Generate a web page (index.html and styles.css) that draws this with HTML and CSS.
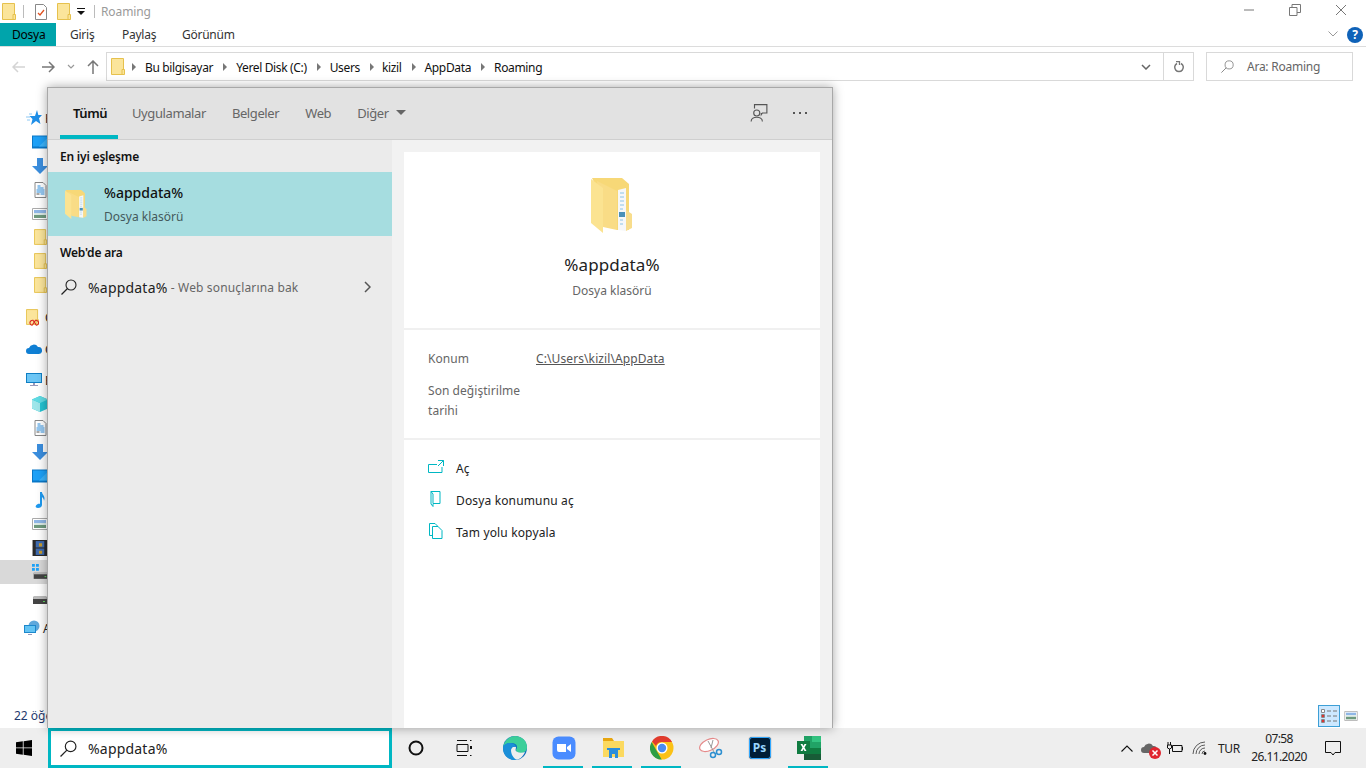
FILE: index.html
```html
<!DOCTYPE html>
<html lang="tr">
<head>
<meta charset="utf-8">
<title>Roaming</title>
<link rel="stylesheet" href="styles.css">
</head>
<body>
<svg class="defs" width="0" height="0">
  <defs>
    <symbol id="folder" viewBox="0 0 14 17">
      <path d="M.5.5h12v16H.5z" fill="#fbe59b" stroke="#e6c14d"/>
      <path d="M11 11.5h2.500v5H11z" fill="#fbe59b" stroke="#e6c14d"/>
    </symbol>
    <symbol id="desk" viewBox="0 0 16 13">
      <path d="M0 0h16v13H0z" fill="#0a78c8"/>
      <path d="M1 1h14v10H1z" fill="#1ea1f7"/>
      <path d="M7 11 15 3v8z" fill="#3db4fb"/>
    </symbol>
    <symbol id="down" viewBox="0 0 16 16">
      <path d="M5 0h6v8h5l-8 8-8-8h5z" fill="#3b8ede"/>
    </symbol>
    <symbol id="doc" viewBox="0 0 12 16">
      <path d="M.5.500h8l3 3v12H.5z" fill="#fff" stroke="#888"/>
      <path d="M3 4h3M3 6h6M2 8h8M2 10h8M6 12h4" stroke="#2b8fe0"/>
      <path d="M2 12h3" stroke="#555"/>
    </symbol>
    <symbol id="pic" viewBox="0 0 16 12">
      <path d="M.5.500h15v11H.5z" fill="#fff" stroke="#aaa"/>
      <path d="M2 2h12v3H2z" fill="#8fb6e6"/>
      <path d="M2 5h12v2H2z" fill="#dbeae6"/>
      <path d="M2 7h12v3H2z" fill="#6f9a7e"/>
    </symbol>
    <symbol id="drive" viewBox="0 0 14 8">
      <path d="M1 0h12l1 3v5H0V3z" fill="#444"/>
      <path d="M1 0h12l1 3H0z" fill="#bbb"/>
      <path d="M10 5h2v1h-2z" fill="#5fd35f"/>
    </symbol>
    <symbol id="glass" viewBox="0 0 16 16">
      <circle cx="10" cy="6" r="5" fill="none" stroke="currentColor" stroke-width="1.100"/>
      <path d="M6.500 9.500.500 15.500" stroke="currentColor" stroke-width="1.200"/>
    </symbol>
    <symbol id="foldopen" viewBox="0 0 42 55">
      <path d="M1 0h30l7 6v46H26z" fill="#f7d877"/>
      <path d="M27 12l8-2v43l-8-1z" fill="#f6f7f8"/>
      <path d="M29 15h4M29 19h4M29 23h4M29 27h4M29 31h3M29 42h3M29 46h3" stroke="#8cc4e6"/>
      <path d="M28 34h6v5h-6z" fill="#4a90b8"/>
      <path d="M35 32l6 4v14l-6 3z" fill="#f8dd8c"/>
      <path d="M6 3l20 10v39l-14-3z" fill="#f9dc86"/>
      <path d="M0 1l12 9v45L0 45z" fill="#fbe391"/>
    </symbol>
  </defs>
</svg>

<div class="screen">
  <div class="explorer">
    <div class="titlebar">
      <svg class="t-folder"><use href="#folder"/></svg>
      <span class="t-sep"></span>
      <svg class="t-check" viewBox="0 0 12 16"><path d="M.5.500h8l3 3v12H.5z" fill="#fff" stroke="#888"/><path d="M3 9l2 2 4-5" fill="none" stroke="#e0501f" stroke-width="1.300"/></svg>
      <svg class="t-folder t-folder2"><use href="#folder"/></svg>
      <svg class="t-drop" viewBox="0 0 8 8"><path d="M0 0h8v1H0zM0 3h8L4 7z" fill="#111"/></svg>
      <span class="t-sep t-sep2"></span>
      <span class="t-name">Roaming</span>
      <div class="win">
        <svg class="w-btn" viewBox="0 0 12 12"><path d="M1 6h10" stroke="#777"/></svg>
        <svg class="w-btn" viewBox="0 0 12 12"><path d="M.500 3.500h7.500v8H.500zM3 3.500V.500h8.500v8H8" fill="none" stroke="#777"/></svg>
        <svg class="w-btn" viewBox="0 0 12 12"><path d="M1 1l10 10M11 1 1 11" stroke="#777"/></svg>
      </div>
    </div>
    <div class="ribbon">
      <span class="tab tab-file">Dosya</span>
      <span class="tab tab-a">Giriş</span>
      <span class="tab tab-b">Paylaş</span>
      <span class="tab">Görünüm</span>
      <svg class="rib-chev" viewBox="0 0 10 6"><path d="M.500.500 5 5 9.500.500" fill="none" stroke="#999"/></svg>
      <span class="help">?</span>
    </div>
    <div class="addr">
      <div class="nav-btns">
        <svg class="nb" viewBox="0 0 14 12"><path d="M13 6H1M6 1 1 6l5 5" fill="none" stroke="#d4d4d4" stroke-width="1.500"/></svg>
        <svg class="nb" viewBox="0 0 14 12"><path d="M1 6h12M8 1l5 5-5 5" fill="none" stroke="#777" stroke-width="1.500"/></svg>
        <svg class="nb-s" viewBox="0 0 8 5"><path d="M1 1l3 3 3-3" fill="none" stroke="#999" stroke-width="1.200"/></svg>
        <svg class="nb nb-up" viewBox="0 0 12 14"><path d="M6 14V1M1 6l5-5 5 5" fill="none" stroke="#777" stroke-width="1.500"/></svg>
      </div>
      <div class="crumbs">
        <svg class="c-folder"><use href="#folder"/></svg>
        <span class="c-arrow first"></span><span class="crumb">Bu bilgisayar</span>
        <span class="c-arrow"></span><span class="crumb">Yerel Disk (C:)</span>
        <span class="c-arrow"></span><span class="crumb">Users</span>
        <span class="c-arrow c-arrow-n"></span><span class="crumb">kizil</span>
        <span class="c-arrow"></span><span class="crumb">AppData</span>
        <span class="c-arrow"></span><span class="crumb">Roaming</span>
        <svg class="c-drop" viewBox="0 0 10 6"><path d="M1 1l4 4 4-4" fill="none" stroke="#666" stroke-width="1.500"/></svg>
        <span class="c-refresh"><svg class="c-ref" viewBox="0 0 12 12"><path d="M4 2.500a4.300 4.300 0 1 0 4 0" fill="none" stroke="#777" stroke-width="1.500"/><path d="M3 .500h3.500v3.500" fill="none" stroke="#777" stroke-width="1.300"/></svg></span>
      </div>
      <div class="find">
        <svg class="find-i"><use href="#glass"/></svg>
        <span>Ara: Roaming</span>
      </div>
    </div>
    <div class="main">
      <div class="side">
        <div class="row r-star"><svg class="ic ic-star" viewBox="0 0 16 16"><path d="M11 0l1.300 5H16l-3 3.300L14.500 14 10 11l-5 4 1.500-6L3.500 6H9z" fill="#1f8fe8"/><path d="M0 7h4M1 10h3M3 4h3" stroke="#8cc8f4"/></svg><span class="lbl">Hızlı</span></div>
        <div class="row in"><svg class="ic"><use href="#desk"/></svg></div>
        <div class="row in"><svg class="ic"><use href="#down"/></svg></div>
        <div class="row in"><svg class="ic ic-n"><use href="#doc"/></svg></div>
        <div class="row in"><svg class="ic"><use href="#pic"/></svg></div>
        <div class="row in tight"><svg class="ic ic-n"><use href="#folder"/></svg></div>
        <div class="row in"><svg class="ic ic-n"><use href="#folder"/></svg></div>
        <div class="row in"><svg class="ic ic-n"><use href="#folder"/></svg></div>
        <div class="row gap8"><span class="cc"><svg class="ic ic-c"><use href="#folder"/></svg><svg class="cc-b" viewBox="0 0 10 8"><path d="M3 7.300a2.500 2.500 0 1 1 1-5L6.500 6a1.800 1.800 0 0 0 1 1.300 2.500 2.500 0 1 0-1-5L4 6a1.800 1.800 0 0 1-1 1.300z" fill="none" stroke="#d8231f" stroke-width="1.100"/></svg></span><span class="lbl">Creative Cloud</span></div>
        <div class="row gap8"><svg class="ic" viewBox="0 0 16 10"><path d="M3 10a3 3 0 0 1 0-6 5 5 0 0 1 9-1 3.500 3.500 0 0 1 1 7z" fill="#0f7fd4"/></svg><span class="lbl">OneDrive</span></div>
        <div class="row gap7"><svg class="ic" viewBox="0 0 16 14"><path d="M0 0h16v10H0z" fill="#0f7fc4"/><path d="M1 1h14v8H1z" fill="#6cc6f5"/><path d="M7 10h2v2h3v1H4v-1h3z" fill="#99b"/></svg><span class="lbl">Bu bilgisayar</span></div>
        <div class="row in"><svg class="ic" viewBox="0 0 16 16"><path d="M8 0l8 3.500v9L8 16 0 12.500v-9z" fill="#25c3d2"/><path d="M0 3.500 8 7v9l-8-3.500z" fill="#9ee6ea"/><path d="M8 7l8-3.500L8 0 0 3.500z" fill="#61dbe3"/></svg></div>
        <div class="row in"><svg class="ic ic-n"><use href="#doc"/></svg></div>
        <div class="row in"><svg class="ic"><use href="#down"/></svg></div>
        <div class="row in"><svg class="ic"><use href="#desk"/></svg></div>
        <div class="row in"><svg class="ic" viewBox="0 0 16 16"><path d="M8 0h2c0 3 4 4 2 9 0-2-1-3-2-4v8c0 2-2 3-4 3s-3-1-2-2.500c1-1.500 3-2 4-1.500z" fill="#1e9af0"/></svg></div>
        <div class="row in"><svg class="ic"><use href="#pic"/></svg></div>
        <div class="row in"><svg class="ic" viewBox="0 0 14 15"><path d="M0 0h14v15H0z" fill="#2a2a2a"/><path d="M3 1h8v6H3z" fill="#3e6bb0"/><path d="M3 8h8v6H3z" fill="#3e6bb0"/><path d="M6 3h3v3H6zM6 10h3v3H6z" fill="#c89a2b"/></svg></div>
        <div class="row in sel"><svg class="ic ic-drive" viewBox="0 0 14 14"><path d="M0 0h2.500v2.500H0zM3.500 0H6v2.500H3.500zM0 3.500h2.500V6H0zM3.500 3.500H6V6H3.500z" fill="#1ea1f7"/><path d="M1.500 8h12.500v5H1.500z" fill="#444"/><path d="M1.500 7h12.500v2H1.500z" fill="#bbb"/><path d="M11 10.500h1.500v1H11z" fill="#5fd35f"/></svg></div>
        <div class="row in gap3"><svg class="ic ic-dv"><use href="#drive"/></svg></div>
        <div class="row gap5"><svg class="ic" viewBox="0 0 16 16"><circle cx="10" cy="6" r="5.500" fill="#5fa8dc"/><path d="M0 5h12v8H0z" fill="#1d88cc"/><path d="M1 6h10v6H1z" fill="#63c3f3"/><path d="M4 14h4v1H4z" fill="#99b"/></svg><span class="lbl">Ağ</span></div>
      </div>
      <div class="content"></div>
    </div>
    <div class="status">
      <span class="count">22 öğe</span>
      <span class="view view-on"><svg class="v-i" viewBox="0 0 16 14"><path d="M.500.500h3v3h-3zM.500 5.500h3v3h-3zM.500 10.500h3v3h-3z" fill="#fff" stroke="#888"/><path d="M1 6h2v2H1zM1 11h2v2H1z" fill="#d33"/><path d="M6 2h4M12 2h4M6 7h4M12 7h4M6 12h4M12 12h4" stroke="#777"/></svg></span>
      <span class="view view-p"><svg class="v-p"><use href="#pic"/></svg></span>
    </div>
  </div>

  <div class="taskbar">
    <svg class="start" viewBox="0 0 16 16"><path d="M0 2.300 6.800 1.300v6.200H0zM7.600 1.200 16 0v7.500H7.600zM0 8.300h6.800v6.400L0 13.700zM7.600 8.300H16V16l-8.400-1.200z" fill="#000"/></svg>
    <div class="search">
      <svg class="s-i"><use href="#glass"/></svg>
      <span>%appdata%</span>
    </div>
    <div class="tb-icons">
      <span class="tb"><svg class="i16 nudge1" viewBox="0 0 16 16"><circle cx="8" cy="8" r="6.500" fill="none" stroke="#111" stroke-width="2"/></svg></span>
      <span class="tb"><svg class="i16 nudge2" viewBox="0 0 16 16"><path d="M1 .5h10M1 15.500h10M1 4.500h11v7H1zM14 .5h1.500M14 15.500h1.500" fill="none" stroke="#111"/><path d="M14 6h2v3h-2z" fill="#111"/></svg></span>
      <span class="tb"><svg class="i24" viewBox="0 0 24 24"><circle cx="12" cy="12" r="12" fill="#0f6fbe"/><path d="M0 12C1 4 7 0 12 0c7 0 12 5 12 11 0 4-3 6-6 6-3 0-5-1-5-3 0-1 1-1 1-3 0-3-3-4-6-4C4 7 1 9 0 12z" fill="#3ccf9a"/><path d="M8 14c0-3 3-4 5-3 0 2-1 3 0 4 2 2 6 2 9 1-2 5-6 8-10 8-4-1-5-6-4-10z" fill="#eee"/><path d="M0 12C0 9 3 7 7 7c3 0 5 1 6 4-3-1-5 0-5 3 0 4 2 8 6 10-1 0-1 0-2 0C5 24 0 19 0 12z" fill="#1b8fd8"/></svg></span>
      <span class="tb on"><svg class="i24" viewBox="0 0 24 24"><rect width="23" height="23" x=".500" y=".500" rx="6" fill="#4a8cff"/><path d="M5 8h9a2 2 0 0 1 0 0v8H7a2 2 0 0 1-2-2zM15 11l4-3v8l-4-3z" fill="#fff"/></svg></span>
      <span class="tb on"><svg class="i24" viewBox="0 0 24 24"><path d="M2 2h9l2 3H2z" fill="#e8a60f"/><path d="M2 5h21v16H2z" fill="#fbd95f"/><path d="M8 14h9v8h-3v-4h-3v4H8z" fill="#2b8edb"/><path d="M6 12h13v2H6z" fill="#2b8edb"/></svg></span>
      <span class="tb on"><svg class="i24" viewBox="0 0 24 24"><circle cx="12" cy="12" r="11.500" fill="#fbc116"/><path d="M2 5.500A11.500 11.500 0 0 1 22 6H12a6 6 0 0 0-6 4z" fill="#e23c2e"/><path d="M1.700 6 6.700 15l5 8.500A11.500 11.500 0 0 1 1.700 6z" fill="#2f9e44"/><circle cx="12" cy="12" r="5.500" fill="#fff"/><circle cx="12" cy="12" r="4.200" fill="#4a8bf0"/></svg></span>
      <span class="tb"><svg class="i24" viewBox="0 0 24 24"><ellipse cx="10" cy="9" rx="10" ry="5.500" transform="rotate(-25 10 9)" fill="#fff" stroke="#e58a8a" stroke-width="1.200"/><path d="M9 5l6 11M14 4l-2 8" stroke="#999"/><circle cx="14" cy="19" r="2.500" fill="none" stroke="#2d8fd0" stroke-width="1.500"/><circle cx="20" cy="16" r="2.500" fill="none" stroke="#2d8fd0" stroke-width="1.500"/></svg></span>
      <span class="tb"><span class="ps"><span class="ps-t">Ps</span></span></span>
      <span class="tb on"><svg class="i24" viewBox="0 0 24 24"><path d="M7 0h17v24H7z" fill="#21a366"/><path d="M15 0h9v6h-9z" fill="#33c481"/><path d="M7 12h8v6H7z" fill="#107c41"/><path d="M15 12h9v6h-9z" fill="#107c41"/><path d="M7 18h17v6H7z" fill="#185c37"/><path d="M0 5h13v13H0z" fill="#107c41"/><path d="M3.500 8h2l1 2 1-2h2l-2 3.500 2 3.500h-2l-1-2-1 2h-2l2-3.500z" fill="#fff"/></svg></span>
    </div>
    <div class="tray">
      <svg class="tr-up" viewBox="0 0 12 7"><path d="M.500 6.500 6 1l5.500 5.500" fill="none" stroke="#111" stroke-width="1.100"/></svg>
      <span class="tr-cloud"><svg class="i16" viewBox="0 0 16 12"><path d="M3 11a3 3 0 0 1 0-6 5 5 0 0 1 9-1 3.500 3.500 0 0 1 1 7z" fill="#666"/></svg><svg class="x-badge" viewBox="0 0 12 12"><circle cx="6" cy="6" r="6" fill="#e0252f"/><path d="M3.500 3.500l5 5M8.500 3.500l-5 5" stroke="#fff" stroke-width="1.500"/></svg></span>
      <svg class="tr-bat" viewBox="0 0 16 12"><path d="M5.500 3.500H15v6H5.500z" fill="none" stroke="#111"/><path d="M15 5h1v3h-1z" fill="#111"/><path d="M1 0v3M3.500 0v3M.500 3h4v3l-2 1-2-1zM2.500 7v5" fill="none" stroke="#111"/></svg>
      <svg class="tr-wifi" viewBox="0 0 16 14"><path d="M1 13A12 12 0 0 1 13 1M4 13a9 9 0 0 1 9-9M7 13a6 6 0 0 1 6-6M10 13a3 3 0 0 1 3-3" fill="none" stroke="#333" stroke-width=".8"/><circle cx="13" cy="12.500" r="1.400" fill="#111"/></svg>
      <span class="tr-lang">TUR</span>
      <span class="clock"><span>07:58</span><span>26.11.2020</span></span>
      <svg class="tr-note" viewBox="0 0 16 15"><path d="M.500.500h15v11H10l-2 2.500-2-2.500H.500z" fill="none" stroke="#111"/></svg>
    </div>
  </div>

  <div class="panel">
    <div class="p-head">
      <span class="p-tab active">Tümü</span>
      <span class="p-tab">Uygulamalar</span>
      <span class="p-tab">Belgeler</span>
      <span class="p-tab">Web</span>
      <span class="p-tab">Diğer<span class="tri"></span></span>
      <svg class="p-fb" viewBox="0 0 16 16"><path d="M4 4V.500h11v7.500h-4l-1 1.500V8" fill="none" stroke="#555"/><circle cx="6" cy="8" r="2.700" fill="none" stroke="#555"/><path d="M1 15.500c0-5 10-5 10 0" fill="none" stroke="#555"/></svg>
      <span class="p-more"><i></i><i></i><i></i></span>
    </div>
    <div class="p-body">
      <div class="p-left">
        <div class="p-sec">En iyi eşleşme</div>
        <div class="best">
          <svg class="best-i"><use href="#foldopen"/></svg>
          <div class="best-t"><span class="best-n">%appdata%</span><span class="best-s">Dosya klasörü</span></div>
        </div>
        <div class="p-sec p-sec2">Web'de ara</div>
        <div class="web">
          <svg class="web-i"><use href="#glass"/></svg>
          <span class="web-n">%appdata%</span><span class="web-s">&nbsp;- Web sonuçlarına bak</span>
          <svg class="web-c" viewBox="0 0 7 12"><path d="M1 1l5 5-5 5" fill="none" stroke="#555" stroke-width="1.500"/></svg>
        </div>
      </div>
      <div class="p-right">
        <div class="card">
          <div class="c-top">
            <svg class="big"><use href="#foldopen"/></svg>
            <div class="big-n">%appdata%</div>
            <div class="big-s">Dosya klasörü</div>
          </div>
          <div class="c-info">
            <div class="info"><span class="k">Konum</span><a class="v">C:\Users\kizil\AppData</a></div>
            <div class="info"><span class="k">Son değiştirilme tarihi</span></div>
          </div>
          <div class="c-act">
            <div class="act"><svg class="a-i" viewBox="0 0 16 14"><path d="M14 7v5.500H.500V4.500H9M10 .5h5.500V6M15.500.5 10 6" fill="none" stroke="#00b7c3"/></svg>Aç</div>
            <div class="act"><svg class="a-i" viewBox="0 0 16 16"><path d="M3 .5h9v12H5v3L3 13zM3 .5 5 3v9" fill="none" stroke="#00b7c3"/></svg>Dosya konumunu aç</div>
            <div class="act"><svg class="a-i" viewBox="0 0 16 16"><path d="M4.500 12.500H1.500V.5H7l3 3M4.500 3.500H10l4 4v8H4.500z" fill="none" stroke="#00b7c3"/></svg>Tam yolu kopyala</div>
          </div>
        </div>
      </div>
    </div>
  </div>
</div>
</body>
</html>
```

FILE: styles.css
```css
* { box-sizing: border-box; }
html, body { margin: 0; padding: 0; }
body { font-family: "Noto Sans", "Open Sans", sans-serif; font-size: 12px; color: #222; background: #fff; }
.defs { position: absolute; }
svg { display: block; flex: none; }
.screen { position: relative; width: 1366px; height: 768px; overflow: hidden; display: flex; flex-direction: column; }
.explorer { flex: 1; display: flex; flex-direction: column; min-height: 0; }

.titlebar { height: 23px; display: flex; align-items: center; padding-left: 2px; }
.t-folder { width: 14px; height: 17px; }
.t-sep { width: 1px; height: 13px; background: #bbb; margin-left: 7px; }
.t-check { width: 12px; height: 16px; margin-left: 11px; }
.t-folder2 { margin-left: 10px; }
.t-drop { width: 8px; height: 8px; margin-left: 6px; }
.t-sep2 { margin-left: 9px; }
.t-name { margin-left: 6px; color: #9a9a9a; letter-spacing: -.1px; }
.win { margin-left: auto; display: flex; gap: 34px; padding-right: 19px; margin-top: -4px; }
.w-btn { width: 12px; height: 12px; }

.ribbon { height: 24px; display: flex; align-items: center; border-bottom: 1px solid #dcdcdc; position: relative; }
.tab { width: 56px; padding-left: 14px; white-space: nowrap; color: #333; letter-spacing: -.25px; }
.tab-a { width: 52px; }
.tab-b { width: 60px; padding-left: 14px; }
.tab-file { height: 23px; line-height: 23px; background: #00a4ab; color: #000; padding-left: 12px; }
.rib-chev { width: 10px; height: 6px; margin-left: auto; margin-right: 9px; margin-top: -1px; }
.help { width: 16px; height: 16px; border-radius: 50%; background: #0f62b8; color: #fff; font-weight: 700; font-size: 12px; line-height: 16px; text-align: center; margin-right: 3px; }

.addr { height: 29px; margin-top: 5px; display: flex; align-items: stretch; }
.nav-btns { width: 106px; display: flex; align-items: center; padding-left: 12px; }
.nb { width: 14px; height: 12px; }
.nb + .nb { margin-left: 15px; }
.nb-s { width: 8px; height: 5px; margin-left: 12px; }
.nav-btns .nb-up { width: 12px; height: 14px; margin-left: 12px; }
.crumbs { width: 1088px; border: 1px solid #d9d9d9; display: flex; align-items: center; padding-left: 4px; }
.c-folder { width: 14px; height: 17px; }
.c-arrow { width: 0; height: 0; border-left: 4px solid #777; border-top: 4px solid transparent; border-bottom: 4px solid transparent; margin: 0 9px 0 10px; }
.c-arrow.first { margin: 0 9px 0 7px; }
.c-arrow.c-arrow-n { margin: 0 8px 0 10px; }
.crumb { white-space: nowrap; color: #111; letter-spacing: -.35px; margin-top: 1px; }
.c-drop { width: 10px; height: 6px; margin-left: auto; margin-right: 12px; }
.c-refresh { width: 30px; height: 100%; border-left: 1px solid #d9d9d9; display: flex; align-items: center; justify-content: center; }
.c-ref { width: 12px; height: 12px; }
.find { width: 147px; margin-left: 12px; border: 1px solid #d9d9d9; display: flex; align-items: center; padding-left: 14px; color: #666; letter-spacing: -.25px; }
.find-i { width: 13px; height: 13px; color: #888; margin-right: 13px; }

.main { flex: 1; display: flex; min-height: 0; margin-top: 25px; }
.side { width: 168px; display: flex; flex-direction: column; }
.row { height: 24px; display: flex; align-items: center; padding-left: 26px; flex: none; }
.row .lbl { margin-left: 3px; white-space: nowrap; }
.row.in { padding-left: 32px; }
.row.gap8 { margin-top: 8px; }
.row.gap7 { margin-top: 7px; }
.row.gap3 { margin-top: 3px; }
.row.gap5 { margin-top: 5px; padding-left: 24px; }
.row.sel { background: #d9d9d9; }
.row.tight { margin-top: -1px; }
.ic { width: 16px; height: 16px; }
.ic-n { width: 13px; height: 16px; margin-left: 2px; }
.ic-dv { width: 14px; height: 8px; margin-left: 1px; margin-top: 2px; }
.cc { position: relative; width: 16px; height: 16px; display: block; }
.ic-c { width: 13px; height: 16px; }
.cc-b { position: absolute; left: 3px; top: 9px; width: 10px; height: 8px; }
.content { flex: 1; }

.status { height: 24px; display: flex; align-items: center; padding-left: 14px; padding-right: 8px; }
.count { color: #1f3a6e; margin-right: auto; margin-top: -2px; }
.view { height: 22px; display: flex; align-items: center; justify-content: center; }
.view-on { width: 22px; background: #cce8ff; border: 1px solid #3d9fd6; margin-right: 4px; }
.view-p { width: 14px; }
.v-i { width: 16px; height: 14px; }
.v-p { width: 14px; height: 10px; }

.taskbar { height: 40px; background: #eeeeee; display: flex; align-items: center; flex: none; }
.start { width: 16px; height: 16px; margin-left: 16px; }
.search { width: 344px; height: 40px; margin-left: 16px; background: #fff; border: 3px solid #00b7c3; display: flex; align-items: center; padding-left: 9px; font-size: 14px; color: #222; letter-spacing: .2px; }
.s-i { width: 17px; height: 17px; color: #222; margin-right: 11px; }
.tb-icons { display: flex; height: 40px; }
.tb { width: 49px; height: 40px; display: flex; align-items: center; justify-content: center; position: relative; }
.tb.on::after { content: ""; position: absolute; bottom: 0; left: 4px; right: 5px; height: 2px; background: #00b7c3; }
.i16 { width: 16px; height: 16px; }
.i24 { width: 24px; height: 24px; }
.nudge1 { margin-left: -2px; }
.nudge2 { margin-left: -4px; }
.ps { width: 22px; height: 22px; background: #001e36; border: 1px solid #31a8ff; border-radius: 3px; display: flex; align-items: center; justify-content: center; box-shadow: 0 0 1px #444; }
.ps-t { color: #9ad6ff; font-weight: 700; font-size: 12px; line-height: 1; }
.tray { margin-left: auto; height: 40px; display: flex; align-items: center; padding-right: 25px; }
.tr-up { width: 12px; height: 7px; }
.tr-cloud { position: relative; margin-left: 8px; width: 16px; }
.x-badge { position: absolute; right: -4px; bottom: -3px; width: 12px; height: 12px; }
.tr-bat { width: 16px; height: 12px; margin-left: 10px; }
.tr-wifi { width: 16px; height: 14px; margin-left: 9px; }
.tr-lang { margin-left: 10px; width: 26px; letter-spacing: -.3px; color: #222; }
.clock { width: 64px; margin-left: 3px; display: flex; flex-direction: column; align-items: center; line-height: 18px; color: #222; letter-spacing: -.6px; }
.tr-note { width: 16px; height: 15px; margin-left: 14px; }

.panel { position: absolute; left: 47px; top: 87px; width: 786px; height: 641px; border: 1px solid #a8a8a8; border-bottom: 0; background: #f2f2f2; box-shadow: 0 0 10px rgba(0,0,0,.35); display: flex; flex-direction: column; }
.p-head { height: 52px; flex: none; background: #e2e2e2; border-bottom: 1px solid #cfcfcf; display: flex; align-items: center; padding-left: 12px; }
.p-tab { height: 51px; padding: 0 13px 2px; color: #666; font-size: 13px; white-space: nowrap; position: relative; display: flex; align-items: center; letter-spacing: -.4px; }
.p-tab.active { color: #111; font-weight: 600; width: 58px; margin-right: 1px; }
.p-tab.active::after { content: ""; position: absolute; left: 0; right: 0; bottom: 0; height: 4px; background: #00b7c3; }
.tri { width: 0; height: 0; border-top: 5px solid #666; border-left: 5px solid transparent; border-right: 5px solid transparent; margin-left: 7px; }
.p-fb { width: 18px; height: 18px; margin-left: auto; margin-top: -2px; margin-right: 1px; }
.p-more { display: flex; gap: 4px; margin-left: 24px; margin-right: 25px; margin-top: -2px; }
.p-more i { width: 2px; height: 2px; background: #555; display: block; }

.p-body { flex: 1; display: flex; min-height: 0; }
.p-left { width: 344px; flex: none; background: #ebebeb; }
.p-sec { height: 32px; padding: 8px 0 0 12px; font-weight: 600; color: #111; line-height: 18px; letter-spacing: -.2px; }
.p-sec2 { height: 32px; }
.best { height: 64px; background: #a6dde0; display: flex; align-items: center; padding-left: 17px; }
.best-i { width: 22px; height: 29px; margin-right: 17px; }
.best-t { display: flex; flex-direction: column; padding-top: 2px; }
.best-n { font-size: 14px; font-weight: 500; color: #111; line-height: 20px; }
.best-s { color: #44595b; line-height: 20px; margin-top: 4px; }
.web { height: 38px; display: flex; align-items: center; padding-left: 13px; }
.web-i { width: 16px; height: 16px; color: #222; margin-right: 11px; }
.web-n { font-size: 14px; color: #222; letter-spacing: .2px; }
.web-s { color: #666; letter-spacing: .15px; }
.web-c { width: 7px; height: 12px; margin-left: auto; margin-right: 21px; }

.p-right { flex: 1; padding: 12px 12px 0; display: flex; min-width: 0; }
.card { flex: 1; background: #fff; display: flex; flex-direction: column; }
.c-top { height: 178px; flex: none; display: flex; flex-direction: column; align-items: center; border-bottom: 2px solid #f0f0f0; padding-top: 26px; }
.big { width: 42px; height: 55px; }
.big-n { font-size: 17px; color: #222; margin-top: 20px; line-height: 24px; letter-spacing: .1px; }
.big-s { color: #666; margin-top: 5px; line-height: 18px; }
.c-info { height: 110px; flex: none; border-bottom: 2px solid #f0f0f0; padding: 19px 24px 0; }
.info { display: flex; margin-bottom: 12px; line-height: 20px; color: #666; letter-spacing: .05px; }
.k { width: 108px; flex: none; }
.v { color: #555; text-decoration: underline; letter-spacing: .1px; }
.c-act { padding: 12px 24px 0; }
.act { height: 32px; display: flex; align-items: center; color: #222; letter-spacing: .15px; }
.a-i { width: 16px; height: 16px; margin-right: 12px; margin-top: -3px; }
```
